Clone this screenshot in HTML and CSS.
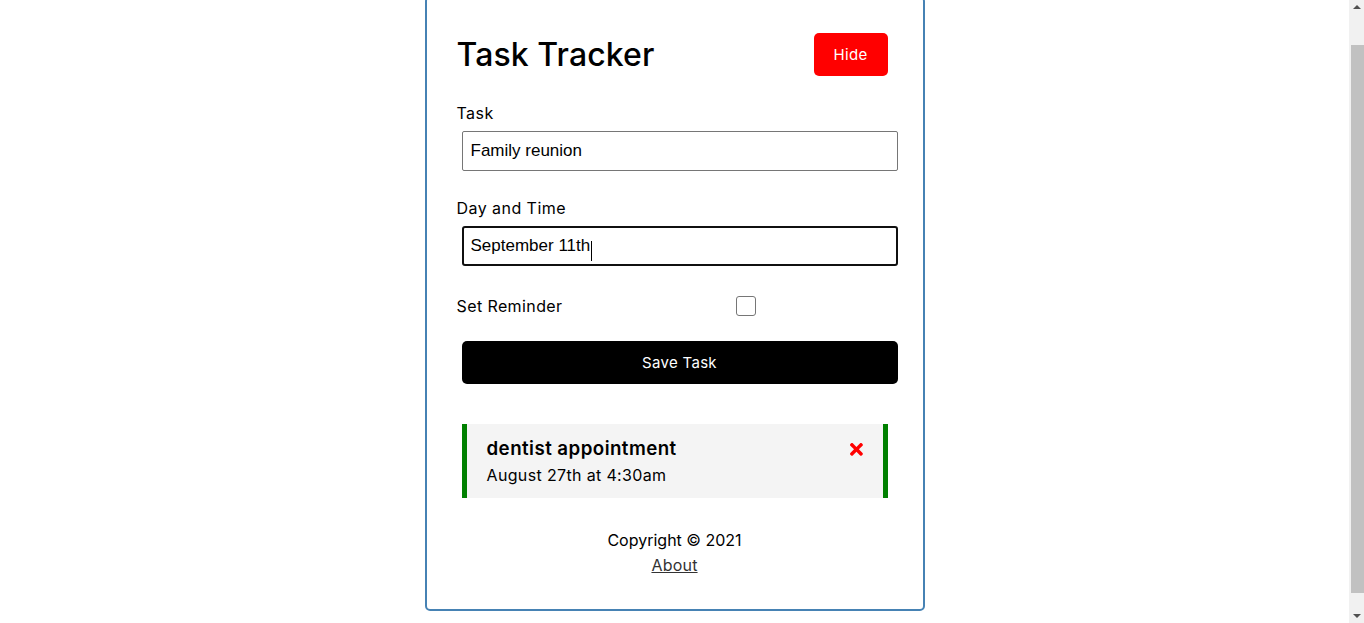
FILE: index.html
```html
<!DOCTYPE html>
<html lang="en">
<head>
<meta charset="utf-8">
<title>Task Tracker</title>
<link rel="stylesheet" href="styles.css">
</head>
<body>
<div class="container">
  <header class="header">
    <h1 class="title">Task Tracker</h1>
    <button class="btn btn-hide">Hide</button>
  </header>
  <form class="add-form">
    <div class="form-control">
      <label class="field-label">Task</label>
      <input class="text-input" type="text" value="Family reunion">
    </div>
    <div class="form-control">
      <label class="field-label">Day and Time</label>
      <div class="input-wrap">
        <input class="text-input focused" id="day" type="text" value="September 11th">
        <span class="caret"></span>
      </div>
    </div>
    <div class="form-control-check">
      <label class="check-label">Set Reminder</label>
      <span class="check-wrap"><input class="check" type="checkbox"></span>
    </div>
    <input type="submit" value="Save Task" class="btn btn-block">
  </form>
  <div class="task reminder">
    <h3 class="task-title">dentist appointment
      <svg class="del-icon" viewBox="0 0 352 512" aria-hidden="true"><path d="M242.72 256l100.07-100.07c12.28-12.28 12.28-32.19 0-44.48l-22.24-22.240c-12.28-12.28-32.19-12.28-44.48 0L176 189.28 75.93 89.21c-12.28-12.28-32.19-12.28-44.48 0L9.21 111.45c-12.28 12.28-12.28 32.19 0 44.48L109.28 256 9.21 356.07c-12.28 12.28-12.28 32.19 0 44.48l22.24 22.24c12.28 12.28 32.2 12.28 44.48 0L176 322.72l100.07 100.07c12.28 12.28 32.2 12.28 44.48 0l22.24-22.24c12.28-12.28 12.28-32.19 0-44.48L242.72 256z"/></svg>
    </h3>
    <p class="task-day">August 27th at 4:30am</p>
  </div>
  <footer class="footer">
    <p class="footer-line">Copyright &copy; 2021</p>
    <a class="footer-link" href="#about">About</a>
  </footer>
</div>
<div class="scrollbar" aria-hidden="true">
  <span class="sb-arrow sb-up"></span>
  <span class="sb-thumb"></span>
  <span class="sb-arrow sb-down"></span>
</div>
<script src="script.js"></script>
</body>
</html>
```

FILE: styles.css
```css
* {
  box-sizing: border-box;
  margin: 0;
  padding: 0;
}

body {
  font-family: "Inter", "Open Sans", sans-serif;
  color: #000;
  background: #fff;
  padding-right: 15px;
}

.container {
  width: 500px;
  margin: 30px auto;
  border: 2px solid steelblue;
  border-radius: 5px;
  padding: 30px;
  min-height: 300px;
}

.header {
  display: flex;
  justify-content: space-between;
  align-items: center;
  height: 53px;
  margin-bottom: 20px;
}

.title {
  font-size: 32px;
  font-weight: 500;
  line-height: 48px;
  letter-spacing: 0.1px;
}

.btn {
  display: inline-block;
  background: #000;
  color: #fff;
  border: none;
  padding: 10px 20px;
  margin: 5px;
  border-radius: 5px;
  font-size: 15px;
  line-height: 23px;
  font-family: inherit;
  letter-spacing: 0.3px;
  cursor: pointer;
}

.btn-hide {
  background: red;
  width: 74px;
  padding: 10px 0;
}

.btn-block {
  display: block;
  width: 100%;
}

.form-control {
  display: flow-root;
  margin: 20px 0;
}

.field-label {
  display: block;
  font-size: 16px;
  line-height: 25px;
  letter-spacing: 0.45px;
}

.input-wrap {
  position: relative;
}

.text-input {
  display: block;
  width: 100%;
  height: 40px;
  margin: 5px;
  padding: 3px 8px;
  font-family: "Liberation Sans", Arial, sans-serif;
  font-size: 17px;
  color: #000;
  border: 1px solid #767676;
  border-radius: 2px;
  outline: none;
  background: #fff;
}

.text-input.focused {
  border: 2px solid #101010;
  border-radius: 3px;
  padding: 2px 7px;
}

.caret {
  position: absolute;
  left: 134px;
  top: 15px;
  width: 1px;
  height: 20px;
  background: #000;
}

.form-control-check {
  display: flex;
  align-items: center;
  justify-content: space-between;
  height: 30px;
  margin: 20px 0;
}

.check-label {
  flex: 1;
  font-size: 16px;
  line-height: 25px;
  letter-spacing: 0.4px;
}

.check-wrap {
  flex: 2;
  margin: 5px;
  height: 20px;
  display: flex;
  justify-content: center;
}

.check {
  appearance: none;
  -webkit-appearance: none;
  width: 20px;
  height: 20px;
  border: 1px solid #767676;
  border-radius: 3px;
  background: #fff;
}

.add-form {
  margin-bottom: 40px;
}

.task {
  background: #f4f4f4;
  margin: 5px;
  padding: 11px 20px 10px;
  height: 74px;
  cursor: pointer;
}

.task.reminder {
  border-left: 5px solid green;
  border-right: 5px solid green;
}

.task-title {
  display: flex;
  align-items: center;
  justify-content: space-between;
  font-size: 18.72px;
  font-weight: 600;
  line-height: 28px;
  letter-spacing: 0.45px;
}

.del-icon {
  width: 12.9px;
  height: 18.72px;
  fill: red;
}

.task-day {
  font-size: 16px;
  line-height: 25px;
  letter-spacing: 0.35px;
}

.footer {
  margin-top: 30px;
  padding-bottom: 1px;
  text-align: center;
  font-size: 16px;
  line-height: 25px;
}

.footer-line {
  line-height: 25px;
}

.footer-link {
  color: #333;
  letter-spacing: 0.2px;
}

.scrollbar {
  position: fixed;
  top: 0;
  right: 0;
  width: 15px;
  height: 100%;
  background: #f1f1f1;
}

.sb-thumb {
  position: absolute;
  left: 2px;
  right: 0;
  top: 45px;
  height: 548px;
  background: #c1c1c1;
}

.sb-arrow {
  position: absolute;
  left: 4px;
  width: 0;
  height: 0;
  border-left: 4px solid transparent;
  border-right: 4px solid transparent;
}

.sb-up {
  top: 5px;
  border-bottom: 4px solid #505050;
}

.sb-down {
  bottom: 5px;
  border-top: 4px solid #505050;
}
```

FILE: script.js
```js
window.scrollTo(0, 34);
```
